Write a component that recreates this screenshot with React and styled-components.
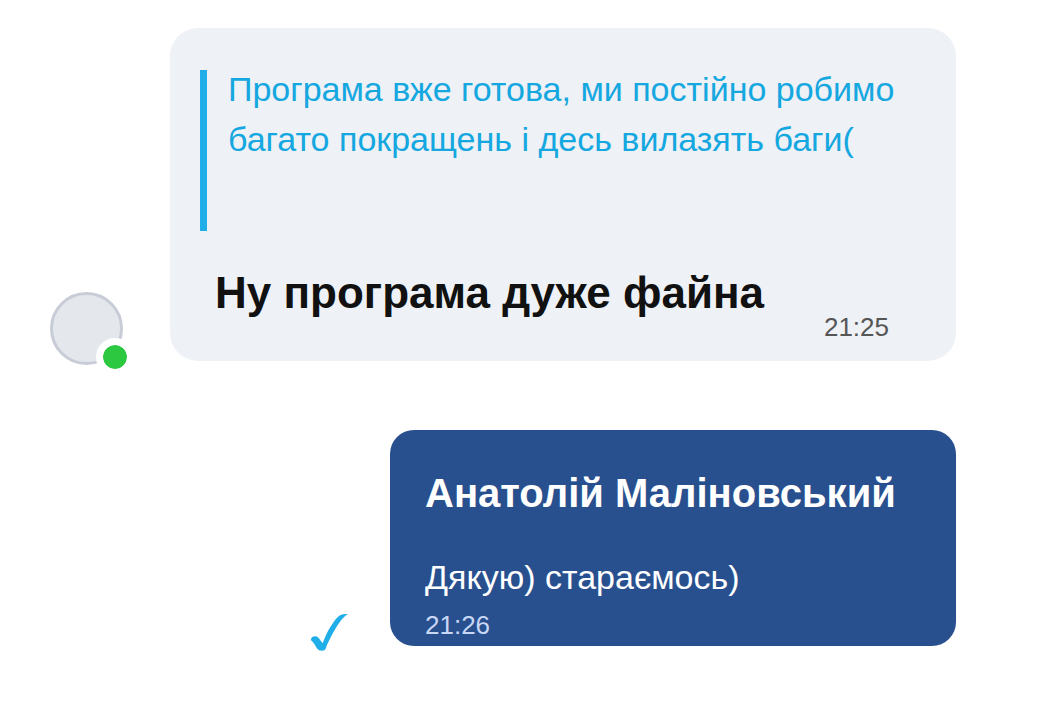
import styled, { createGlobalStyle } from "styled-components";

const COLORS = {
  accent: "#20aee8",
  quote: "#14a7e0",
  incoming: "#eef1f6",
  outgoing: "#28508f",
  text: "#111111",
  grey: "#555555",
  paleBlue: "#c8d7f5",
  online: "#2bc840",
};

const GlobalStyle = createGlobalStyle`
  body {
    margin: 0;
    background-color: #fff;
    font-family: "Liberation Sans", Arial, sans-serif;
  }
`;

const Chat = styled.main`
  display: flex;
  flex-direction: column;
  gap: 65px;
  padding: 28px 84px 68px 50px;
`;

const Message = styled.article`
  display: flex;
  align-items: flex-end;
  gap: ${(props) => props.$gap}px;
  padding-left: ${(props) => props.$indent || 0}px;
`;

const Avatar = styled.div`
  position: relative;
  flex: none;
  box-sizing: border-box;
  width: 73px;
  height: 73px;
  border: 3px solid #c8ccd6;
  border-radius: 50%;
  background-color: #e4e7ec;
`;

const Status = styled.span`
  position: absolute;
  right: -14px;
  bottom: -14px;
  width: 24px;
  height: 24px;
  border: 7px solid #fff;
  border-radius: 50%;
  background-color: ${COLORS.online};
  background-clip: padding-box;
`;

const Bubble = styled.div`
  flex: 1;
  border-radius: ${(props) => (props.$own ? 24 : 28)}px;
  padding: ${(props) => (props.$own ? "38px 35px 6px" : "36px 30px 19px")};
  margin-bottom: ${(props) => (props.$own ? 0 : 4)}px;
  background-color: ${(props) =>
    props.$own ? COLORS.outgoing : COLORS.incoming};
  color: ${(props) => (props.$own ? "#fff" : COLORS.text)};
`;

const Quote = styled.blockquote`
  display: flex;
  gap: 21px;
  min-height: 167px;
  margin: 0 0 37px;
  color: ${COLORS.quote};
`;

const QuoteBar = styled.span`
  flex: none;
  width: 7px;
  margin-top: 6px;
  background-color: ${COLORS.accent};
`;

const Text = styled.p`
  margin: 0;
  font-size: 34px;
  line-height: 50px;
`;

const Answer = styled.div`
  display: flex;
  justify-content: space-between;
  min-height: 74px;
  padding: 0 37px 0 15px;
`;

const Title = styled.h2`
  margin: 0;
  font-size: ${(props) => props.$size}px;
  font-weight: bold;
  line-height: 50px;
`;

const Time = styled.time`
  display: block;
  align-self: flex-end;
  color: ${(props) => (props.$own ? COLORS.paleBlue : COLORS.grey)};
  font-size: 26px;
  line-height: 30px;
`;

const Body = styled.div`
  margin: 34px 0 8px;
`;

const Tick = styled.svg`
  flex: none;
  width: 40px;
  height: 40px;
  margin-bottom: -7px;
`;

const App = () => {
  return (
    <>
      <GlobalStyle />
      <Chat>
        <Message $gap={47}>
          <Avatar>
            <Status />
          </Avatar>
          <Bubble>
            <Quote>
              <QuoteBar />
              <Text>
                Програма вже готова, ми постійно робимо багато покращень і десь
                вилазять баги(
              </Text>
            </Quote>
            <Answer>
              <Title $size={44}>Ну програма дуже файна</Title>
              <Time>21:25</Time>
            </Answer>
          </Bubble>
        </Message>
        <Message $gap={40} $indent={260}>
          <Tick viewBox="0 0 120 120" aria-hidden="true">
            <path
              d="M3 79 C4 74 9 70 15 70 C23 70 27 76 31 82 L38 91 C43 77 48 66 54 54 C59 45 64 37 69 30 C76 20 82 12 90 7 C95 4 101 3 114 3 C104 9 97 17 91 25 C85 33 79 42 74 51 C65 67 58 80 51 96 C48 103 47 109 43 112 C39 114 31 114 27 112 C22 109 18 102 15 96 C12 91 8 86 3 82 Z"
              fill={COLORS.accent}
            />
          </Tick>
          <Bubble $own>
            <Title $size={40}>Анатолій Маліновський</Title>
            <Body>
              <Text>Дякую) стараємось)</Text>
            </Body>
            <Time $own>21:26</Time>
          </Bubble>
        </Message>
      </Chat>
    </>
  );
};

export default App;
